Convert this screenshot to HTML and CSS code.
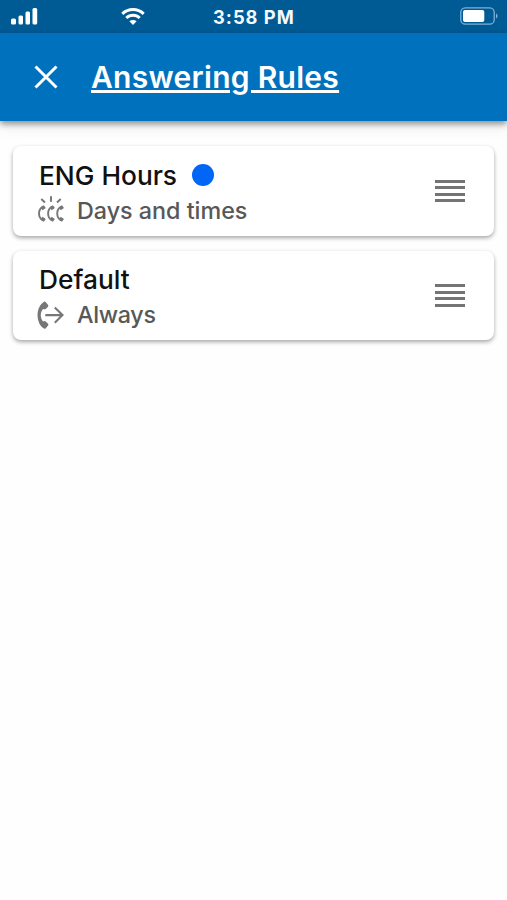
FILE: index.html
```
<!DOCTYPE html>
<html lang="en">
	<head>
		<meta charset="UTF-8">
		<meta name="viewport" content="width=device-width, initial-scale=1.0">
		<title>Answering Rules</title>
		<link rel="stylesheet" href="styles.css">
	</head>
	<body>
		<div class="status-bar">
			<div class="status-left">
				<svg class="signal" width="28" height="18" viewBox="0 0 28 18" fill="#fff">
					<rect x="0" y="11.5" width="5" height="6" rx="1.5"/>
					<rect x="7.5" y="8.5" width="4.5" height="9" rx="1.5"/>
					<rect x="14.5" y="4.5" width="4.5" height="13" rx="1.5"/>
					<rect x="21.5" y="1" width="4.7" height="16.5" rx="1.5"/>
				</svg>
				<svg class="wifi" width="24" height="18" viewBox="0 0 24 18" fill="none" stroke="#fff" stroke-width="3">
					<path d="M1.3 6.8C7.3 1.2 16.7 1.2 22.7 6.8"/>
					<path d="M5.3 11C9 7.4 15 7.4 18.7 11"/>
					<path d="M12 18L8.4 14.3C10.5 12.6 13.5 12.6 15.6 14.3Z" fill="#fff" stroke="none"/>
				</svg>
			</div>
			<div class="time">3:58 PM</div>
			<svg class="battery" width="38" height="18" viewBox="0 0 38 18">
				<rect x=".8" y=".8" width="33.4" height="16.4" rx="4.5" fill="none" stroke="#7fb0d4" stroke-width="1.3"/>
				<rect x="3" y="3" width="21.3" height="12" rx="2" fill="#fff"/>
				<path d="M36 6.5C38 7.2 38 10.8 36 11.5Z" fill="#7fb0d4"/>
			</svg>
		</div>

		<header>
			<svg class="close" width="24" height="24" viewBox="0 0 24 24" stroke="#fff" stroke-width="3">
				<path d="M1.5 1.5L22.5 22.5M22.5 1.5L1.5 22.5"/>
			</svg>
			<h1>Answering Rules</h1>
		</header>

		<main>
			<div class="rule">
				<div class="rule-info">
					<h2><span>ENG Hours</span><span class="dot"></span></h2>
					<p>
						<!-- three ringing handsets -->
						<svg width="28" height="28" viewBox="0 0 28 28" fill="none" stroke="#777">
							<g stroke-width="2">
								<path d="M4.3 3L8 6.5M14 .3V5.8M23.7 3L20 6.5"/>
							</g>
							<g stroke-width="1.9">
								<path d="M6.3 10.6C.6 13 .6 22 6.3 24.4"/>
								<path d="M15.4 10.6C9.7 13 9.7 22 15.4 24.4"/>
								<path d="M24.5 10.6C18.8 13 18.8 22 24.5 24.4"/>
							</g>
							<g stroke-width="3.5">
								<path d="M4.6 12.8L7.8 10.6M4.6 22.2L7.8 24.4"/>
								<path d="M13.7 12.8L16.9 10.6M13.7 22.2L16.9 24.4"/>
								<path d="M22.8 12.8L26 10.6M22.8 22.2L26 24.4"/>
							</g>
						</svg>
						<span>Days and times</span>
					</p>
				</div>
				<div class="handle"><i></i><i></i><i></i><i></i></div>
			</div>

			<div class="rule">
				<div class="rule-info">
					<h2><span>Default</span></h2>
					<p>
						<!-- forwarded handset -->
						<svg width="28" height="28" viewBox="0 0 28 28" fill="none" stroke="#777">
							<path d="M7 .8Q8 .2 8.8 1.2L11.1 4Q11.7 5 10.8 5.9L8.7 8Q7.8 8.6 6 8C3 11.8 3 16.6 6 20.4Q7.8 19.8 8.7 20.4L10.8 22.5Q11.7 23.4 11.1 24.4L8.8 27.2Q8 28.2 7 27.6C-1.6 22 -1.6 6.2 7 .8Z" fill="#777" stroke="none"/>
							<path d="M8.3 14.1H25.3M17.8 6.4L25.5 14.1L17.8 21.8" stroke-width="2.1"/>
						</svg>
						<span class="always">Always</span>
					</p>
				</div>
				<div class="handle"><i></i><i></i><i></i><i></i></div>
			</div>
		</main>
	</body>
</html>
```
FILE: styles.css
```
* 
{
	box-sizing: border-box;
}
body 
{
	font-family: Inter, "Liberation Sans", sans-serif;
	background-color: #fefefe;
	margin: 0;
	min-height: 100vh;
}
h1, h2, p
{
	margin: 0;
}
svg
{
	display: block;
	flex: none;
}
.status-bar
{
	display: flex;
	justify-content: space-between;
	height: 33px;
	padding: 7px 9px 0 11px;
	background-color: #005b95;
}
.status-left
{
	display: flex;
	gap: 82px;
	width: 202px;
}
.time
{
	flex: 1;
	font-size: 18.3px;
	font-weight: 700;
	line-height: 20px;
	letter-spacing: 1px;
	color: #f5faff;
}
header
{
	display: flex;
	align-items: center;
	gap: 33px;
	height: 88px;
	padding-left: 34px;
	background-color: #0072bd;
	box-shadow: 0 3px 6px rgba(0, 0, 0, 0.4), 0 6px 14px rgba(0, 0, 0, 0.08);
}
h1
{
	font-size: 30px;
	font-weight: 600;
	line-height: 36px;
	letter-spacing: 0.28px;
	color: #fff;
	text-decoration: underline;
	text-decoration-thickness: 2.5px;
	text-underline-offset: 2px;
}
main
{
	display: flex;
	flex-direction: column;
	gap: 15px;
	padding: 25px 13px;
}
.rule
{
	display: flex;
	align-items: center;
	justify-content: space-between;
	height: 89.5px;
	padding: 0 29px 0 24px;
	background-color: #fff;
	border-radius: 8px;
	box-shadow: 0 2px 4px rgba(0, 0, 0, 0.35);
}
.rule-info
{
	padding-top: 4px;
}
h2
{
	display: flex;
	align-items: center;
	gap: 15px;
	padding-left: 2px;
	font-size: 26.3px;
	font-weight: 540;
	line-height: 35px;
	color: #111;
}
.dot
{
	width: 22px;
	height: 22px;
	border-radius: 50%;
	background-color: #0066f5;
}
p
{
	display: flex;
	align-items: center;
	gap: 12px;
	font-size: 23.3px;
	font-weight: 550;
	line-height: 35px;
	color: #585858;
}
.always
{
	letter-spacing: -0.3px;
}
.handle
{
	display: flex;
	flex-direction: column;
	gap: 3.5px;
	width: 30px;
}
.handle i
{
	height: 3px;
	background-color: #747474;
}
```
